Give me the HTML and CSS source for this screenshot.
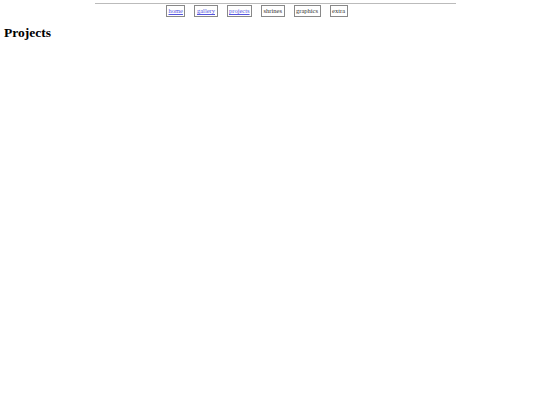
FILE: index.html
```html
<!DOCTYPE html>
<html lang="en">
<head>
    <meta charset="UTF-8">
    <title>Projects</title>
    <link rel="stylesheet" href="styles.css">
</head>
<body>

    <!-- Top navigation -->
    <header class="top">
        <hr class="rule">
        <nav class="nav">
            <a class="box" href="#">home</a>
            <a class="box" href="#">gallery</a>
            <a class="box" href="#">projects</a>
            <span class="box">shrines</span>
            <span class="box">graphics</span>
            <span class="box">extra</span>
        </nav>
    </header>

    <h1 class="title">Projects</h1>

</body>
</html>
```

FILE: styles.css
```css
body {
    font-family: "Liberation Serif", "Times New Roman", serif;
    margin: 0;
    padding: 3px 4px;
    background-color: #fff;
    color: #000;
}

.top {
    width: 361px;
    margin-left: 91px;
}

.rule {
    margin: 0;
    border: 0;
    border-top: 1px solid #bbb;
    height: 0;
}

.nav {
    display: flex;
    gap: 9px;
    padding-left: 71px;
    margin-top: 1px;
}

.box {
    font-size: 6.5px;
    line-height: 10px;
    padding: 0 1.5px;
    border: 1px solid #888;
    color: #333;
    text-decoration: none;
}

a.box {
    color: #55d;
    text-decoration: underline;
}

.title {
    font-size: 13.5px;
    margin: 8px 0 0;
}
```
